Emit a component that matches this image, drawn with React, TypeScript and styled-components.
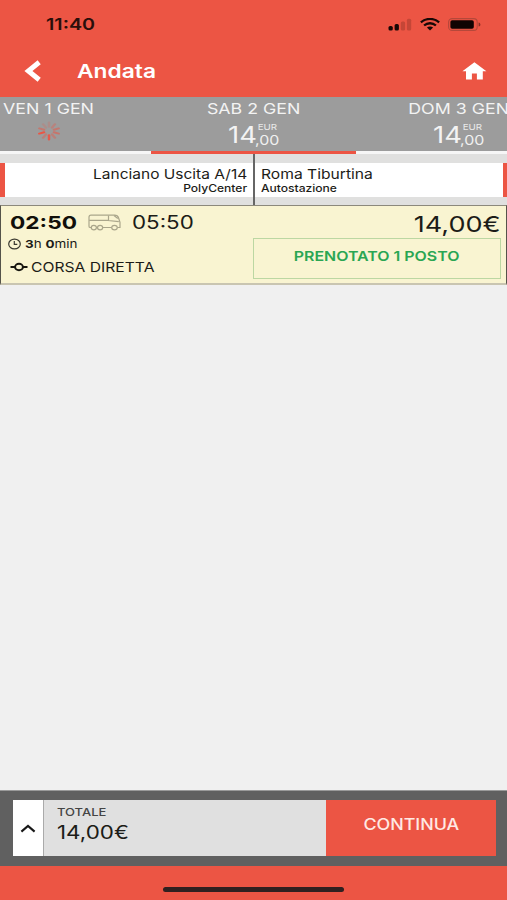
import React from 'react';
import styled, { createGlobalStyle } from 'styled-components';

const RED = '#ec5544';

const GlobalStyle = createGlobalStyle`
  * { box-sizing: border-box; }
  body { margin: 0; background: #f0f0f0; font-family: Inter, "Liberation Sans", sans-serif; }
  svg { display: block; flex: none; }
`;

type TextProps = {
  $size: number;
  $line: number;
  $weight?: number;
  $color?: string;
  $sx?: number;
  $origin?: string;
};

const Text = styled.span<TextProps>`
  display: block;
  white-space: nowrap;
  font-size: ${(p) => p.$size}px;
  line-height: ${(p) => p.$line}px;
  font-weight: ${(p) => p.$weight ?? 400};
  color: ${(p) => p.$color ?? '#1c1c18'};
  transform: scaleX(${(p) => p.$sx ?? 1.2});
  transform-origin: ${(p) => p.$origin ?? 'left'} center;
`;

const Screen = styled.div`
  width: 507px;
  height: 900px;
  display: flex;
  flex-direction: column;
  overflow: hidden;
  background: #f0f0f0;
`;

const Header = styled.header`
  height: 97px;
  background: ${RED};
`;

const StatusBar = styled.div`
  height: 48px;
  display: flex;
  align-items: center;
  justify-content: space-between;
  padding: 0 25px 0 46px;
`;

const StatusIcons = styled.div`
  display: flex;
  align-items: center;
  gap: 8px;
`;

const TitleBar = styled.div`
  height: 46px;
  display: flex;
  align-items: center;
  padding: 0 20px 0 24px;
`;

const Title = styled.h1`
  margin: 0;
  padding-left: 36px;
  flex: 1;
`;

const Days = styled.nav`
  height: 57px;
  width: 615px;
  margin-left: -54px;
  display: flex;
  flex: none;
  background: #9c9c9c;
`;

const Day = styled.button<{ $active?: boolean }>`
  flex: 0 0 205px;
  height: 57px;
  border: 0;
  border-bottom: 3px solid ${(p) => (p.$active ? RED : '#f6f6f6')};
  padding: 1px 0 0;
  background: transparent;
  font-family: inherit;
  display: flex;
  flex-direction: column;
  align-items: center;
`;

const Fare = styled.div`
  display: flex;
  width: 62px;
  height: 30px;
`;

const FareWhole = styled.div`
  width: 32px;
`;

const FareDetail = styled.div`
  padding-top: 2px;
`;

const Stops = styled.section`
  height: 51px;
  flex: none;
  padding: 9px 0 8px;
  display: flex;
  position: relative;
  background: #e0e0df;

  &::after {
    content: '';
    position: absolute;
    top: 0;
    bottom: 0;
    left: 253px;
    width: 2px;
    background: #666;
  }
`;

const Stop = styled.div<{ $from?: boolean }>`
  flex: 1;
  padding: ${(p) => (p.$from ? '3px 6px 0 0' : '3px 0 0 7px')};
  display: flex;
  flex-direction: column;
  align-items: ${(p) => (p.$from ? 'flex-end' : 'flex-start')};
  background: #fff;
  border-left: ${(p) => (p.$from ? `5px solid ${RED}` : '0')};
  border-right: ${(p) => (p.$from ? '0' : `4px solid ${RED}`)};
`;

const Trip = styled.article`
  height: 80px;
  flex: none;
  display: flex;
  background: #f9f4d1;
  border: 1px solid #55534a;
  border-top-color: #8c897c;
  border-bottom: 2px solid #c9c5b1;
`;

const TripInfo = styled.div`
  width: 252px;
  padding-left: 9px;
`;

const Times = styled.div`
  display: flex;
  align-items: center;
  height: 26px;
  padding-top: 7px;
`;

const DepartSlot = styled.div`
  width: 78px;
`;

const ArriveSlot = styled.div`
  padding-left: 11px;
`;

const Duration = styled.div`
  height: 14px;
  display: flex;
  align-items: center;
  gap: 4px;
  margin-top: 5px;
  margin-left: -2px;
`;

const Direct = styled.div`
  display: flex;
  align-items: center;
  gap: 3px;
  height: 18px;
  margin-top: 7px;
`;

const Booking = styled.div`
  flex: 1;
  padding: 3px 5px 0 0;
  display: flex;
  flex-direction: column;
  align-items: flex-end;
`;

const Booked = styled.div`
  width: 248px;
  height: 41px;
  margin-top: -2px;
  padding-top: 7px;
  border: 1px solid #bcd7a2;
  display: flex;
  justify-content: center;
`;

const Results = styled.main`
  flex: 1;
`;

const Checkout = styled.section`
  height: 76px;
  flex: none;
  padding: 9px 11px 10px 13px;
  display: flex;
  background: #606060;
  border-top: 1px solid #9a9a9a;
`;

const Expand = styled.button`
  width: 31px;
  border: 0;
  border-right: 1px solid #aaa;
  padding: 0;
  display: flex;
  align-items: center;
  justify-content: center;
  background: #fff;
`;

const Total = styled.div`
  flex: 1;
  padding: 5px 0 0 12.5px;
  background: #e0e0e0;
`;

const Continue = styled.button`
  width: 170px;
  border: 0;
  padding: 15px 0 0;
  display: flex;
  align-items: flex-start;
  justify-content: center;
  background: ${RED};
  font-family: inherit;
`;

const HomeArea = styled.footer`
  height: 34px;
  flex: none;
  display: flex;
  justify-content: center;
  padding-top: 21px;
  background: ${RED};
`;

const HomePill = styled.div`
  width: 181px;
  height: 5px;
  border-radius: 3px;
  background: #302020;
`;

const Signal = () => (
  <svg width="24" height="13" viewBox="0 0 24 13">
    <rect x="0.5" y="8" width="4.3" height="4.5" rx="1.6" fill="#170806" />
    <rect x="6.6" y="6" width="4.3" height="6.5" rx="1.5" fill="#170806" />
    <rect x="12.8" y="3.4" width="4.3" height="9.1" rx="1.5" fill="#c54637" />
    <rect x="18.9" y="0.8" width="4.3" height="11.7" rx="1.5" fill="#c54637" />
  </svg>
);

const Wifi = () => (
  <svg width="20" height="13" viewBox="0 0 20 13" fill="none" stroke="#170806" strokeWidth="2.3">
    <path d="M0.9 4.4C6-0.2 14-0.2 19.1 4.4" />
    <path d="M4.1 7.5C7.4 4.5 12.6 4.5 15.9 7.5" />
    <path d="M6.9 9.6C8.7 8 11.3 8 13.1 9.6L10 12.5Z" fill="#170806" stroke="none" />
  </svg>
);

const Battery = () => (
  <svg width="34" height="13" viewBox="0 0 34 13">
    <rect x="0.6" y="0.6" width="28.6" height="11.8" rx="3.5" fill="none" stroke="#b5483a" strokeWidth="1.1" />
    <rect x="2.4" y="2.2" width="23.4" height="8.6" rx="1.8" fill="#100302" />
    <path d="M30.6 4.4C33 5 33 8 30.6 8.6Z" fill="#8a3026" />
  </svg>
);

const Back = () => (
  <svg width="17" height="22" viewBox="0 0 17 22" fill="none" stroke="#fff" strokeWidth="5">
    <path d="M15.2 2.3L4.4 11L15.2 19.7" strokeLinejoin="miter" />
  </svg>
);

const Home = () => (
  <svg width="25" height="18" viewBox="0 0 25 18" fill="#fff">
    <path d="M12.4 0.3L24.4 9.2H20.8V17.6H14.9V11.4H9.9V17.6H4V9.2H0.4Z" />
  </svg>
);

const spokeOpacity = [0.2, 0.35, 0.5, 0.55, 0.4, 0.9, 0.4, 1, 0.5, 0.2];

const Spinner = () => (
  <svg width="26" height="22" viewBox="-13 -11 26 22" stroke={RED} strokeWidth="2" strokeLinecap="round">
    <g transform="scale(1.22 1)">
      {spokeOpacity.map((opacity, i) => (
        <line
          key={i}
          x1="0"
          y1="-4.2"
          x2="0"
          y2="-8.4"
          opacity={opacity}
          transform={`rotate(${i * 36})`}
        />
      ))}
    </g>
  </svg>
);

const Bus = () => (
  <svg width="33" height="17" viewBox="0 0 33 17" fill="none" stroke="#aaa68b" strokeWidth="1.2">
    <path d="M3.5 13.5H2.2Q1 13.5 1 12.2V3.2Q1 1.2 3 1.2H26.5Q29.7 1.2 30.6 4L32 8.4V13.5H29.5M8.5 13.5H9.2M14.6 13.5H23.6" />
    <path d="M1.2 6.3H20.5M20.5 1.5V6.5L30.8 7.7M26 1.5L29.8 4.5" />
    <ellipse cx="5.8" cy="13.6" rx="2.6" ry="2.3" />
    <ellipse cx="12.1" cy="13.6" rx="2.6" ry="2.3" />
    <ellipse cx="26.5" cy="13.6" rx="2.8" ry="2.3" />
  </svg>
);

const Clock = () => (
  <svg width="13" height="12" viewBox="0 0 13 12" fill="none" stroke="#3a3930" strokeWidth="1.2">
    <ellipse cx="6.5" cy="6" rx="5.8" ry="4.9" />
    <path d="M6.3 3V6.3H9.3" />
  </svg>
);

const Node = () => (
  <svg width="18" height="10" viewBox="0 0 18 10" fill="none" stroke="#17160f" strokeWidth="2">
    <path d="M0.5 5H5M13 5H17.5" />
    <ellipse cx="9" cy="5" rx="3.9" ry="3.2" />
  </svg>
);

const Chevron = () => (
  <svg width="16" height="9" viewBox="0 0 16 9" fill="none" stroke="#181818" strokeWidth="2.1">
    <path d="M1.4 7.6L8 1.9L14.6 7.6" />
  </svg>
);

const Price = () => (
  <Fare>
    <FareWhole>
      <Text $size={22.5} $line={29} $color="#f3f3f3" $sx={1.22}>14</Text>
    </FareWhole>
    <FareDetail>
      <Text $size={8} $line={10} $color="#eaeaea" $sx={1.22}>EUR</Text>
      <Text $size={13.3} $line={17} $color="#f0f0f0" $sx={1.2}>,00</Text>
    </FareDetail>
  </Fare>
);

const DayLabel = ({ children }: { children: React.ReactNode }) => (
  <Text $size={14.7} $line={22} $color="#f3f3f3" $sx={1.21} $origin="center">{children}</Text>
);

export default function App() {
  return (
    <>
      <GlobalStyle />
      <Screen>
        <Header>
          <StatusBar>
            <Text $size={16} $line={20} $weight={600} $color="#2a0e0a" $sx={1.23}>11:40</Text>
            <StatusIcons>
              <Signal />
              <Wifi />
              <Battery />
            </StatusIcons>
          </StatusBar>
          <TitleBar>
            <Back />
            <Title>
              <Text $size={18.5} $line={24} $weight={600} $color="#fff" $sx={1.23}>Andata</Text>
            </Title>
            <Home />
          </TitleBar>
        </Header>
        <Days>
          <Day>
            <DayLabel>VEN 1 GEN</DayLabel>
            <Spinner />
          </Day>
          <Day $active>
            <DayLabel>SAB 2 GEN</DayLabel>
            <Price />
          </Day>
          <Day>
            <DayLabel>DOM 3 GEN</DayLabel>
            <Price />
          </Day>
        </Days>
        <Stops>
          <Stop $from>
            <Text $size={13.6} $line={16} $sx={1.14} $origin="right">Lanciano Uscita A/14</Text>
            <Text $size={10.4} $line={13} $weight={500} $sx={1.16} $origin="right">PolyCenter</Text>
          </Stop>
          <Stop>
            <Text $size={13.6} $line={16} $sx={1.15}>Roma Tiburtina</Text>
            <Text $size={10.4} $line={13} $weight={500} $sx={1.16}>Autostazione</Text>
          </Stop>
        </Stops>
        <Trip>
          <TripInfo>
            <Times>
              <DepartSlot>
                <Text $size={18} $line={20} $weight={700} $color="#11100b" $sx={1.26}>02:50</Text>
              </DepartSlot>
              <Bus />
              <ArriveSlot>
                <Text $size={18} $line={20} $sx={1.24}>05:50</Text>
              </ArriveSlot>
            </Times>
            <Duration>
              <Clock />
              <Text $size={11} $line={14} $sx={1.22}><b>3</b>h <b>0</b>min</Text>
            </Duration>
            <Direct>
              <Node />
              <Text $size={13.5} $line={18} $sx={1.16}>CORSA DIRETTA</Text>
            </Direct>
          </TripInfo>
          <Booking>
            <Text $size={22} $line={31} $sx={1.23} $origin="right">14,00€</Text>
            <Booked>
              <Text $size={13.4} $line={20} $weight={600} $color="#2aa653" $sx={1.19} $origin="center">PRENOTATO 1 POSTO</Text>
            </Booked>
          </Booking>
        </Trip>
        <Results />
        <Checkout>
          <Expand aria-label="Dettagli">
            <Chevron />
          </Expand>
          <Total>
            <Text $size={10.8} $line={16} $weight={500} $sx={1.2} $color="#444">TOTALE</Text>
            <Text $size={18.5} $line={23} $sx={1.21}>14,00€</Text>
          </Total>
          <Continue>
            <Text $size={15.4} $line={20} $weight={500} $color="#ffe9e4" $sx={1.16} $origin="center">CONTINUA</Text>
          </Continue>
        </Checkout>
        <HomeArea>
          <HomePill />
        </HomeArea>
      </Screen>
    </>
  );
}
